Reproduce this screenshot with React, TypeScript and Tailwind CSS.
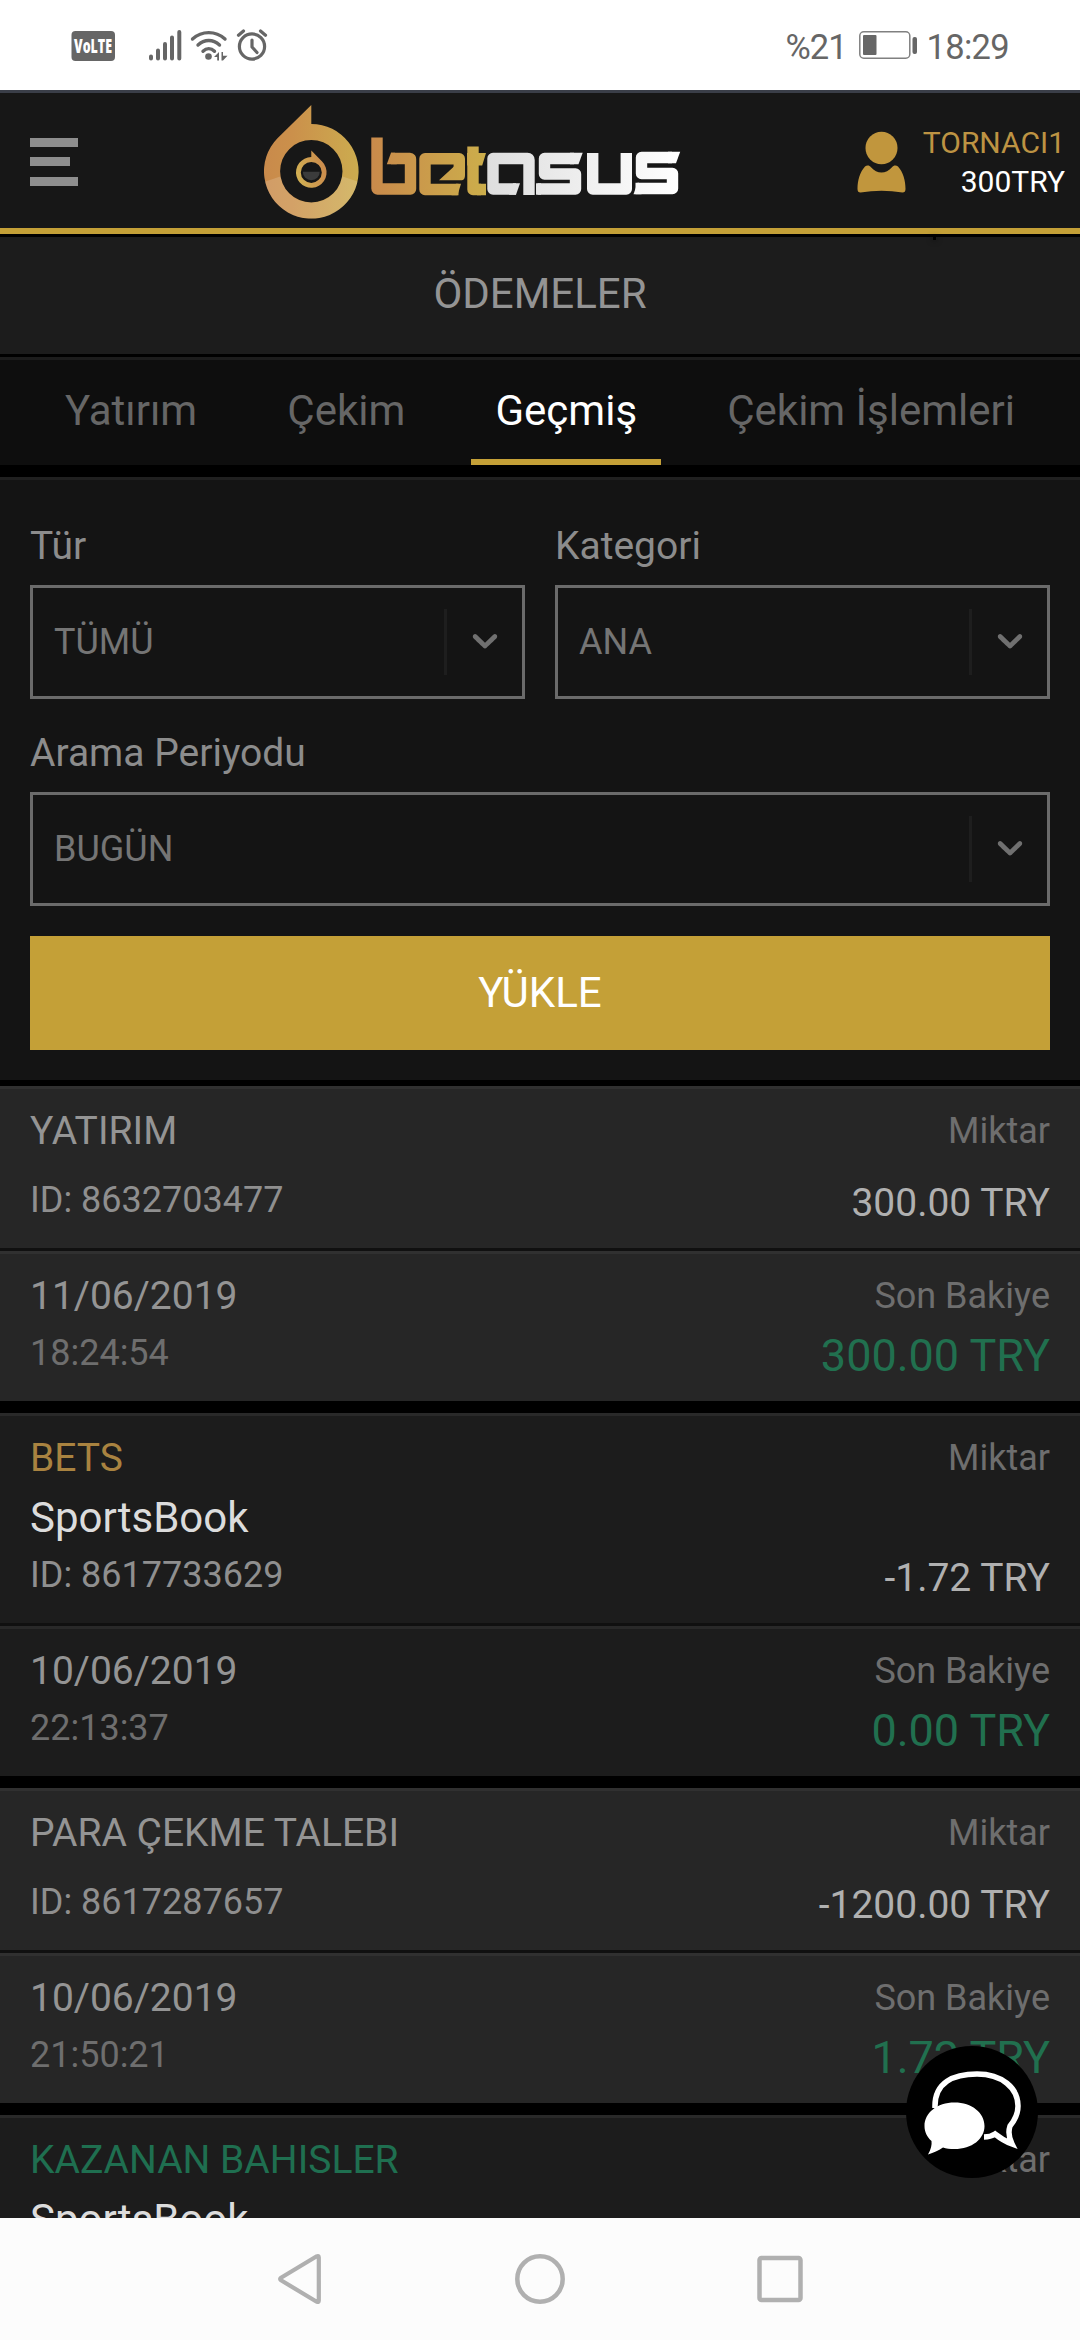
import React from "react";

type Entry = {
  title: string;
  titleClass: string;
  product?: string;
  id: string;
  amount: string;
  date: string;
  time: string;
  balance: string;
  tone: "light" | "dark";
};

const entries: Entry[] = [
  { title: "YATIRIM", titleClass: "text-[#949494]", id: "8632703477", amount: "300.00 TRY", date: "11/06/2019", time: "18:24:54", balance: "300.00 TRY", tone: "light" },
  { title: "BETS", titleClass: "text-[#a98340]", product: "SportsBook", id: "8617733629", amount: "-1.72 TRY", date: "10/06/2019", time: "22:13:37", balance: "0.00 TRY", tone: "dark" },
  { title: "PARA ÇEKME TALEBI", titleClass: "text-[#949494]", id: "8617287657", amount: "-1200.00 TRY", date: "10/06/2019", time: "21:50:21", balance: "1.72 TRY", tone: "light" },
];

function StatusBar() {
  return (
    <div className="flex h-[90px] shrink-0 items-center justify-between bg-white pl-[71px] pr-[71px] text-[#666]">
      <svg width="200" height="40" viewBox="0 0 200 40" fill="none">
        <rect x="0.5" y="6" width="43.5" height="30" rx="4" fill="#666" />
        <text x="22" y="28" textAnchor="middle" textLength="38" lengthAdjust="spacingAndGlyphs" fontFamily="'Open Sans', sans-serif" fontWeight="800" fontSize="20" fill="#fff">VoLTE</text>
        <g stroke="#666" strokeWidth="4" strokeLinecap="round">
          <path d="M80 31.5v2M87 25.500v8M94 19v14.500M101 12.500v21M108.300 7v26.500" />
        </g>
        <g stroke="#666" strokeWidth="3.400" strokeLinecap="round">
          <path d="M121.500 14c9.500-8.500 23-8.500 32.500 0M127 20c6.500-6 15-6 21.500 0M132 26.200c3.500-3.500 8-3.500 11.500 0" />
        </g>
        <circle cx="137.500" cy="31.500" r="3.300" fill="#666" />
        <path d="M148 27v8.500h-1.800v-3.500H143zM150.500 27l1.500 0v3.800h4.500l-4.500 4.700h-1.500z" fill="#666" />
        <g stroke="#666" strokeWidth="3.200" strokeLinecap="round" strokeLinejoin="round">
          <circle cx="181" cy="21.500" r="12.600" />
          <path d="M181 15v7l5 5.500M167.500 10.300l5-4.300M194.500 10.300l-5-4.300" />
        </g>
      </svg>
      <div className="flex items-center text-[34.500px] leading-[40px]">
        <span className="pt-[3px] tracking-[-1px]">%21</span>
        <svg className="ml-[12px] mr-[9px]" width="59" height="30" viewBox="0 0 59 30" fill="none">
          <rect x="0.800" y="1.800" width="50" height="26.400" rx="4" stroke="#808080" strokeWidth="1.500" />
          <rect x="4" y="5" width="13.500" height="20" rx="1" fill="#666" />
          <rect x="53.500" y="7" width="4.500" height="17" rx="2" fill="#666" />
        </svg>
        <span className="pt-[3px] tracking-[-0.7px]">18:29</span>
      </div>
    </div>
  );
}

function Logo() {
  return (
    <svg className="ml-[186px] mt-[3px]" width="418" height="116" viewBox="0 0 418 116" fill="none">
      <defs>
        <linearGradient id="ring" x1="0" y1="0" x2="95" y2="0" gradientUnits="userSpaceOnUse">
          <stop stopColor="#c98a4b" />
          <stop offset="0.300" stopColor="#cb904b" />
          <stop offset="1" stopColor="#ccac4f" />
        </linearGradient>
        <linearGradient id="inner" x1="32" y1="70" x2="62" y2="62" gradientUnits="userSpaceOnUse">
          <stop stopColor="#d2b053" />
          <stop offset="1" stopColor="#cb8a4c" />
        </linearGradient>
        <linearGradient id="gold" x1="107" y1="0" x2="222" y2="0" gradientUnits="userSpaceOnUse">
          <stop stopColor="#c98a4b" />
          <stop offset="1" stopColor="#ccae4b" />
        </linearGradient>
        <linearGradient id="silver" x1="223" y1="0" x2="416" y2="0" gradientUnits="userSpaceOnUse">
          <stop stopColor="#dedede" />
          <stop offset="1" stopColor="#ffffff" />
        </linearGradient>
        <clipPath id="ringLower">
          <path d="M0 78L47.300 62L95 78V116H0z" />
        </clipPath>
      </defs>
      <path fillRule="evenodd" fill="url(#ring)" d="M47.300 1V20A47.300 47.300 0 1 1 13.500 34.200zM47.300 36A31.200 31.200 0 1 0 47.300 98.400A31.200 31.200 0 1 0 47.300 36z" />
      <g clipPath="url(#ringLower)">
        <circle cx="47.300" cy="67.300" r="39.250" stroke="#fff" strokeOpacity="0.160" strokeWidth="16" />
      </g>
      <path d="M38.800 67.700h17a8.500 8.500 0 0 1-17 0z" fill="#3b3b3b" />
      <path fillRule="evenodd" fill="url(#inner)" d="M47.300 46.500L58.100 57.600A15.300 15.300 0 1 1 47.300 53.100zM47.300 57.900A10.500 10.500 0 1 0 47.300 78.900A10.500 10.500 0 1 0 47.300 57.900z" />
      <g stroke="url(#gold)" strokeWidth="11.400" strokeLinejoin="round">
        <path d="M113 33.500V84.600Q113 85 113.500 85H146.500V55.200Q146.500 54.500 146 54.500H127" />
        <path d="M209 42.500V85.500H217" />
        <path d="M194.500 85.500H161V54.800H195.300V70.500" />
      </g>
      <g fill="url(#gold)">
        <path d="M131 48.800h-4l-4.200 11.400h10z" />
        <path d="M190 62.500L175 76.200H198Q201 76 201 71V58h-10z" />
        <path d="M192 79.800h5l-3.500 11.400h-6z" />
        <path d="M203 49h19l-3.800 12.500h-15zM213 79.800h9V91.200h-9z" />
      </g>
      <g stroke="url(#silver)" strokeWidth="11.400" strokeLinejoin="round">
        <path d="M252 85H229V54.500H263.500Q265 54.500 265 56V91" />
        <path d="M310 54.500H280.500V70H311.500V85H273.500" />
        <path d="M328.700 49V85H362.300V49" />
        <path d="M408 53.500H377.500V69.500H408.500V84.500H371.500" />
      </g>
      <g fill="url(#silver)">
        <path d="M249 79.300h7l-4 11.400h-7z" />
        <path d="M306 48.800h12.700L314.500 60.200H306z" />
        <path d="M404 47.800h12.200L412 59.200h-8z" />
        <path d="M375 78.800h-1.500L369.500 90.200h8z" />
        <path d="M272 79.300h5v11.400h-5z" />
      </g>
    </svg>
  );
}

function Header() {
  return (
    <header className="flex h-[144px] shrink-0 items-center border-b-[6px] border-t-[3px] border-b-[#c4a037] border-t-[#3a3e48] bg-[#171717] pl-[30px] pr-[15px]">
      <div className="flex w-[48px] flex-col pt-[3px]">
        <div className="h-[9px] w-[48px] bg-[#8e8e8e]" />
        <div className="mt-[10px] h-[9px] w-[40px] bg-[#8e8e8e]" />
        <div className="mt-[11px] h-[9px] w-[48px] bg-[#8e8e8e]" />
      </div>
      <Logo />
      <svg className="ml-auto mt-[2px]" width="49" height="62" viewBox="0 0 49 62" fill="#c1963d">
        <ellipse cx="24.500" cy="17" rx="16" ry="16.300" />
        <path d="M0.500 58C0.500 49 3 41 8 35.500C10 33.800 12.500 34.200 14 36.200C20 43.300 29 43.300 35 36.200C36.500 34.200 39 33.800 41 35.500C46 41 48.500 49 48.500 58Q48.500 61.500 45.500 61.500Q24.500 57.800 3.500 61.500Q0.500 61.500 0.500 58z" />
      </svg>
      <div className="ml-[17px] pt-[3px] text-right text-[30px] leading-[39px]">
        <div className="text-[#bd9343]">TORNACI1</div>
        <div className="text-white">300TRY</div>
      </div>
    </header>
  );
}

function Tabs() {
  const tabs = ["Yatırım", "Çekim", "Geçmiş", "Çekim İşlemleri"];
  return (
    <nav className="flex h-[108px] shrink-0 justify-between border-t-[3px] border-[#1c1c1c] bg-[#0e0e0e] px-[41px] text-[42px] leading-[101px]">
      {tabs.map((t) => (
        <div key={t} className={t === "Geçmiş" ? "border-b-[6px] border-[#c4a037] px-[24px] text-white" : "px-[24px] text-[#666]"}>
          {t}
        </div>
      ))}
    </nav>
  );
}

function SelectField({ label, value }: { label: string; value: string }) {
  return (
    <div className="min-w-0 flex-1">
      <div className="mb-[15px] text-[39px] leading-[48px] text-[#8c8c8c]">{label}</div>
      <div className="flex h-[114px] items-center border-[3px] border-[#6b6b6b] pl-[21px] text-[36px] text-[#757575]">
        <span className="flex-1">{value}</span>
        <div className="h-[66px] w-[3px] bg-[#1e1e1e]" />
        <div className="flex w-[75px] justify-center pb-[4px]">
          <svg width="42" height="42" viewBox="0 0 20 20" fill="#707070">
            <path d="M4.516 7.548c0.436-0.446 1.043-0.481 1.576 0l3.908 3.747 3.908-3.747c0.533-0.481 1.141-0.446 1.574 0 0.436 0.445 0.408 1.197 0 1.615-0.406 0.418-4.695 4.502-4.695 4.502-0.217 0.223-0.502 0.335-0.787 0.335s-0.570-0.112-0.789-0.335c0 0-4.287-4.084-4.695-4.502s-0.436-1.170 0-1.615z" />
          </svg>
        </div>
      </div>
    </div>
  );
}

function Filters() {
  return (
    <section className="mt-[12px] flex h-[603px] shrink-0 flex-col gap-[30px] border-t-[3px] border-[#202020] bg-[#141414] px-[30px] pt-[42px]">
      <div className="flex gap-[30px]">
        <SelectField label="Tür" value="TÜMÜ" />
        <SelectField label="Kategori" value="ANA" />
      </div>
      <div className="flex">
        <SelectField label="Arama Periyodu" value="BUGÜN" />
      </div>
      <button className="h-[114px] bg-[#c4a037] pb-[2px] text-[42px] text-white">YÜKLE</button>
    </section>
  );
}

function HistoryCard({ e }: { e: Entry }) {
  const tone = e.tone === "light" ? "border-[#303030] bg-[#262626]" : "border-[#292929] bg-[#1c1c1c]";
  return (
    <article className="shrink-0 text-[36px] leading-[60px]">
      <div className={`flex justify-between border-t-[3px] px-[30px] pt-[12px] ${e.product ? "h-[210px]" : "h-[162px]"} ${tone}`}>
        <div className="flex flex-col justify-between pb-[18px] text-[#8f8f8f]">
          <div>
            <div className={`text-[39px] ${e.titleClass}`}>{e.title}</div>
            {e.product && <div className="text-[42px] text-[#dcdcdc]">{e.product}</div>}
          </div>
          <div className={e.product ? "-mt-[3px]" : ""}>ID: {e.id}</div>
        </div>
        <div className="flex flex-col justify-between pb-[15px] text-right">
          <div className="text-[#6e6e6e]">Miktar</div>
          <div className="text-[39px] text-[#b0b0b0]">{e.amount}</div>
        </div>
      </div>
      <div className="h-[3px] bg-[#101010]" />
      <div className={`flex h-[150px] justify-between border-t-[3px] px-[30px] pt-[12px] ${tone}`}>
        <div className="flex flex-col">
          <div className="text-[39px] text-[#949494]">{e.date}</div>
          <div className="-mt-[3px] text-[#6e6e6e]">{e.time}</div>
        </div>
        <div className="text-right">
          <div className="text-[#6e6e6e]">Son Bakiye</div>
          <div className="text-[45px] text-[#21704f]">{e.balance}</div>
        </div>
      </div>
    </article>
  );
}

function NavBar() {
  return (
    <div className="flex h-[122px] shrink-0 items-center justify-between bg-[#fcfcfc] px-[276px]">
      <svg width="48" height="54" viewBox="0 0 48 54" fill="none" stroke="#b0b0b0" strokeWidth="4.200" strokeLinejoin="round">
        <path d="M40.700 4.300Q42.800 3.300 42.800 5.500V48.500Q42.800 50.700 40.700 49.700L5 28.300Q3.200 27 5 25.700z" />
      </svg>
      <svg width="54" height="54" viewBox="0 0 54 54" fill="none" stroke="#b0b0b0" strokeWidth="4.500">
        <circle cx="27" cy="27" r="22.700" />
      </svg>
      <svg width="48" height="54" viewBox="0 0 48 54" fill="none" stroke="#b0b0b0" strokeWidth="4.500">
        <rect x="3.500" y="6" width="41" height="42" rx="2" />
      </svg>
    </div>
  );
}

export default function App() {
  return (
    <div className="flex h-[2340px] w-[1080px] flex-col overflow-hidden bg-black font-['Roboto',sans-serif]">
      <StatusBar />
      <Header />
      <div className="relative mb-[3px] mt-[3px] flex h-[117px] shrink-0 items-center justify-center bg-[#1c1c1c] pb-[4px] text-[42px] text-[#949494]">
        ÖDEMELER
        <div className="absolute left-[933px] top-0 h-[3px] w-[3px] bg-black shadow-[0_0_6px_#000]" />
      </div>
      <Tabs />
      <Filters />
      <main className="relative mt-[6px] flex min-h-0 flex-1 flex-col gap-[12px] overflow-hidden">
        {entries.map((e) => (
          <HistoryCard key={e.id} e={e} />
        ))}
        <article className="flex shrink-0 justify-between border-t-[3px] border-[#292929] bg-[#1c1c1c] px-[30px] pt-[12px] text-[36px] leading-[60px]">
          <div>
            <div className="text-[39px] text-[#1f6f50]">KAZANAN BAHISLER</div>
            <div className="text-[42px] text-[#dcdcdc]">SportsBook</div>
          </div>
          <div className="text-[#6e6e6e]">Miktar</div>
        </article>
        <button aria-label="Chat" className="absolute bottom-[40px] right-[42px] h-[132px] w-[132px] rounded-full bg-black">
          <svg width="132" height="132" viewBox="0 0 132 132" fill="none">
            <path d="M29 62C28 36 48 28 71 28C96 28 112 42 112 60C112 68 109 74 104 80C102 86 103 92 106 98C98 95 94 92 89 88C86 90 82 91 78 91" stroke="#fff" strokeWidth="5.500" />
            <path d="M48.500 56.500C66 56.500 78.500 67 78.500 80C78.500 93 66 103 48.500 103C44 103 40 102.500 37 101.500C32 105 28 106.500 22 108.500C25 103 26 99 25.500 95C21 91 18.500 86 18.500 80C18.500 67 31 56.500 48.500 56.500z" fill="#fff" />
          </svg>
        </button>
      </main>
      <NavBar />
    </div>
  );
}
